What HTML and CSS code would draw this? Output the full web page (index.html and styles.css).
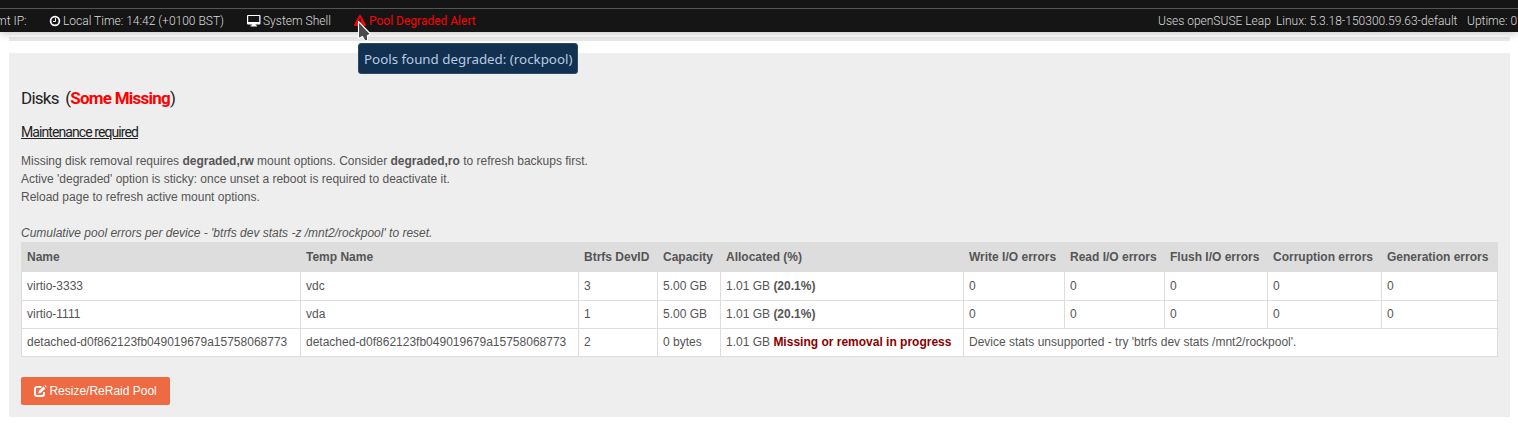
FILE: index.html
```html
<!DOCTYPE html>
<html lang="en">
<head>
<meta charset="utf-8">
<title>Pool</title>
<link rel="stylesheet" href="styles.css">
</head>
<body>
<header class="topbar">
  <div class="nav-edge"></div>
  <div class="status">
    <span class="item ip">mt IP:</span>
    <span class="item time"><svg class="clock" viewBox="0 0 12 12"><circle cx="6" cy="6" r="4.400" fill="none" stroke="#fff" stroke-width="1.700"/><path d="M6.500 3.200v3.300H4" fill="none" stroke="#fff" stroke-width="1"/></svg>Local Time: 14:42 (+0100 BST)</span>
    <span class="item shell"><svg class="monitor" viewBox="0 0 14 12"><path fill="#fff" fill-rule="evenodd" d="M1 0h11.500a1 1 0 0 1 1 1v7.500a1 1 0 0 1-1 1H8.500l.5 1h1V11.500H3.500v-1h1l.5-1H1a1 1 0 0 1-1-1V1a1 1 0 0 1 1-1zM1.200 1v6h11V1z"/></svg>System Shell</span>
    <span class="item alert"><svg class="warning" viewBox="0 0 12 11"><path fill="#f00" fill-rule="evenodd" d="M6 0c.4 0 .7.200.9.500l4.900 9c.3.700 0 1.500-.9 1.500H1.100C.2 11-.1 10.200.2 9.500l4.900-9C5.300.2 5.600 0 6 0zM5 3.500l.3 3.500h1.400L7 3.500zM5.200 8v1.400h1.600V8z"/></svg>Pool Degraded Alert</span>
    <span class="item os">Uses openSUSE Leap</span>
    <span class="item kernel">Linux: 5.3.18-150300.59.63-default</span>
    <span class="item uptime">Uptime: 0</span>
  </div>
</header>
<main class="content">
  <section class="previous"></section>
  <section class="panel">
    <h3 class="title"><span class="disks">Disks</span> (<b>Some Missing</b>)</h3>
    <h4 class="subtitle">Maintenance required</h4>
    <p class="notes">Missing disk removal requires <b>degraded,rw</b> mount options. Consider <b>degraded,ro</b> to refresh backups first.<br>Active 'degraded' option is sticky: once unset a reboot is required to deactivate it.<br>Reload page to refresh active mount options.</p>
    <p class="caption">Cumulative pool errors per device - 'btrfs dev stats -z /mnt2/rockpool' to reset.</p>
    <table class="disk-table">
      <colgroup><col class="c-name"><col class="c-temp"><col class="c-id"><col class="c-cap"><col class="c-alloc"><col class="c-write"><col class="c-read"><col class="c-flush"><col class="c-corr"><col class="c-gen"></colgroup>
      <thead><tr><th>Name</th><th>Temp Name</th><th>Btrfs DevID</th><th>Capacity</th><th>Allocated (%)</th><th>Write I/O errors</th><th>Read I/O errors</th><th>Flush I/O errors</th><th>Corruption errors</th><th>Generation errors</th></tr></thead>
      <tbody>
        <tr class="first"><td>virtio-3333</td><td>vdc</td><td>3</td><td>5.00 GB</td><td>1.01 GB <b>(20.1%)</b></td><td>0</td><td>0</td><td>0</td><td>0</td><td>0</td></tr>
        <tr><td>virtio-1111</td><td>vda</td><td>1</td><td>5.00 GB</td><td>1.01 GB <b>(20.1%)</b></td><td>0</td><td>0</td><td>0</td><td>0</td><td>0</td></tr>
        <tr><td>detached-d0f862123fb049019679a15758068773</td><td>detached-d0f862123fb049019679a15758068773</td><td>2</td><td>0 bytes</td><td>1.01 GB <b class="missing">Missing or removal in progress</b></td><td colspan="5">Device stats unsupported - try 'btrfs dev stats /mnt2/rockpool'.</td></tr>
      </tbody>
    </table>
    <button class="resize" type="button"><svg class="edit" viewBox="0 0 13 12"><path fill="none" stroke="#fff" stroke-width="1.900" d="M7.500 1.900H3a2 2 0 0 0-2 2V9a2 2 0 0 0 2 2h5a2 2 0 0 0 2-2V7"/><path fill="#fff" d="M4.300 8.600l.5-2.600 4.700-4.500 1.900 1.900-4.700 4.700zM10.300.8l.8-.8L12.800 1.700l-.8.8z"/></svg>Resize/ReRaid Pool</button>
  </section>
</main>
<div class="tooltip">Pools found degraded: (rockpool)</div>
<svg class="cursor" viewBox="0 0 14 22"><path d="M1.500 1.500v17l4-2 2.500 4.500 2.700-.8-.3-4.500 3.100-1.700z" fill="#4a4a4a" stroke="#fff" stroke-width="1.100" stroke-linejoin="round"/></svg>
</body>
</html>
```
FILE: styles.css
```css
* { box-sizing: border-box; }
body {
  margin: 0;
  height: 424px;
  overflow: hidden;
  position: relative;
  background: #fff;
  color: #555;
  font: 12px/18px "Liberation Sans", Arial, sans-serif;
}
h3, h4, p { margin: 0; }
.topbar {
  position: relative;
  height: 32px;
  background: #151515;
  box-shadow: 0 1px 8px rgba(0, 0, 0, .25);
}
.nav-edge { height: 9px; border-bottom: 1px solid #555; }
.status {
  display: flex;
  height: 23px;
  padding-top: 1px;
  width: 1530px;
  color: #ddd;
  font: 300 12px/22px Roboto, sans-serif;
  white-space: nowrap;
}
.item { display: flex; align-items: center; flex: none; height: 22px; }
.ip { width: 49px; text-indent: -4px; }
.time { width: 198px; }
.shell { width: 107px; }
.alert { width: 804px; color: #f00; font-weight: 400; }
.os { width: 118px; }
.kernel { width: 191px; }
.clock { width: 12px; height: 12px; margin: -1px 2px 0 0; }
.monitor { width: 14px; height: 12px; margin: 0 2px 0 0; }
.warning { width: 12px; height: 11px; margin: -1px 3px 0 0; }
.content { padding: 5px 8px 0 9px; }
.previous { height: 4px; background: #e9e9e9; margin-bottom: 12px; }
.panel { height: 364px; padding: 35px 12px 0; background: #eee; }
.title {
  height: 20px;
  color: #222;
  font: 400 17px/20px Roboto, sans-serif;
  letter-spacing: -.75px;
}
.title b { color: #f00; font-weight: 700; }
.disks { margin-right: 3px; }
.subtitle {
  height: 20px;
  margin-top: 14px;
  color: #222;
  font: 400 14px/20px Roboto, sans-serif;
  letter-spacing: -.92px;
  text-decoration: underline;
}
.notes { margin-top: 10px; }
.caption { margin-top: 18px; font-style: italic; }
.disk-table {
  width: 1477px;
  table-layout: fixed;
  border-collapse: collapse;
  background: #fff;
}
.c-name { width: 279px; }
.c-temp { width: 278px; }
.c-id { width: 79px; }
.c-cap { width: 63px; }
.c-alloc { width: 243px; }
.c-write { width: 101px; }
.c-read { width: 100px; }
.c-flush { width: 103px; }
.c-corr { width: 114px; }
.c-gen { width: 116px; }
th, td {
  height: 28px;
  padding: 0 5px 1px;
  border: 1px solid #ddd;
  line-height: 18px;
  text-align: left;
  white-space: nowrap;
}
th { height: 29px; padding-bottom: 0; background: #ddd; font-weight: 700; }
.first td { height: 29px; padding-bottom: 0; }
.missing { color: #8b0000; }
.resize {
  display: flex;
  align-items: center;
  width: 149px;
  height: 28px;
  margin-top: 20px;
  padding: 0 0 0 13px;
  border: 0;
  border-radius: 2px;
  background: #ed6a43;
  color: #fff;
  font: 12px/18px "Liberation Sans", Arial, sans-serif;
}
.edit { width: 13px; height: 12px; margin: -1px 2.4px 0 0; }
.tooltip {
  position: absolute;
  left: 358px;
  top: 43px;
  width: 220px;
  height: 31px;
  padding-left: 5px;
  border: 1px solid #2b4a68;
  border-radius: 3px;
  background: #12304f;
  color: #b9cbe0;
  font: 13.33px/31px "Noto Sans", sans-serif;
  white-space: nowrap;
}
.cursor { position: absolute; left: 357px; top: 20px; width: 14px; height: 22px; }
```
